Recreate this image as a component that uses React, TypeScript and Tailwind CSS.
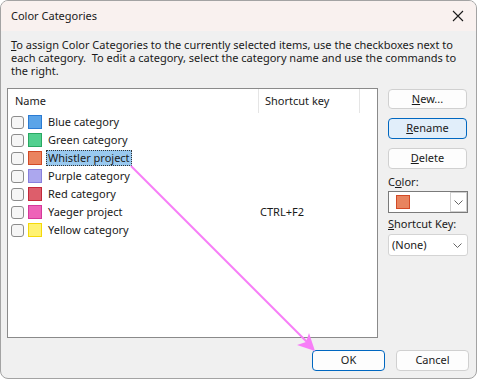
import React from "react";

const font = { fontFamily: '"Noto Sans", "Liberation Sans", sans-serif' };

const cats = [
  { name: "Blue category", fill: "#5ba4e8", border: "#2b7bd3", key: "" },
  { name: "Green category", fill: "#52d08f", border: "#2aa862", key: "" },
  { name: "Whistler project", fill: "#ea845f", border: "#d24a26", key: "", selected: true },
  { name: "Purple category", fill: "#aca7ee", border: "#8880dd", key: "" },
  { name: "Red category", fill: "#dd5e6b", border: "#c3283b", key: "" },
  { name: "Yaeger project", fill: "#ee62b8", border: "#d6389a", key: "CTRL+F2" },
  { name: "Yellow category", fill: "#fff272", border: "#f5d90a", key: "" },
];

function Btn({ children, variant = "normal", className = "" }: { children: React.ReactNode; variant?: "normal" | "focus" | "default"; className?: string }) {
  const v =
    variant === "focus"
      ? "border-[#0067c0] bg-[#e1eefa]"
      : variant === "default"
      ? "border-[#0067c0] bg-[#fdfdfd]"
      : "border-[#d0d0d0] bg-[#fdfdfd]";
  return (
    <div className={`h-[20px] rounded-[4px] border flex items-center justify-center text-[11px] text-[#1a1a1a] ${v} ${className}`}>
      {children}
    </div>
  );
}

export default function App() {
  return (
    <div className="relative w-[477px] h-[380px] bg-white" style={font}>
      <div className="w-[477px] h-[379px] border border-[#a3a3a3] rounded-[8px] bg-[#f0f0f0] overflow-hidden flex flex-col">
        <div className="h-[30px] bg-[#f9f1ef] flex items-center justify-between pl-[10px] pr-[9px] shrink-0">
          <span className="text-[11px] text-[#1a1a1a]">Color Categories</span>
          <svg width="12" height="12" viewBox="0 0 12 12" className="mr-[3px]">
            <path d="M1 1 L11 11 M11 1 L1 11" stroke="#1a1a1a" strokeWidth="1.1" />
          </svg>
        </div>
        <p className="pt-[7px] pl-[10px] pr-[8px] text-[11px] leading-[13px] text-[#1a1a1a] first-letter:underline">
          To assign Color Categories to the currently selected items, use the checkboxes next to each category.&nbsp; To edit a category, select the category name and use the commands to the right.
        </p>
        <div className="flex mt-[11px] ml-[6px]">
          <div className="w-[371px] h-[250px] border border-[#8a8a8a] bg-white text-[11px] text-[#1a1a1a]">
            <div className="h-[24px] flex items-center">
              <div className="w-[250px] pl-[7px] h-full flex items-center">Name</div>
              <div className="w-[1px] h-full bg-[#e5e5e5]" />
              <div className="w-[100px] pl-[6px] h-full flex items-center">Shortcut key</div>
              <div className="w-[1px] h-full bg-[#e5e5e5]" />
            </div>
            {cats.map((c) => (
              <div key={c.name} className="h-[18px] flex items-center">
                <div className="w-[250px] flex items-center pl-[3px]">
                  <div className="w-[13px] h-[13px] rounded-[3px] border border-[#8c8c8c] bg-[#f6f6f6]" />
                  <div className="w-[14px] h-[14px] ml-[4px] border" style={{ background: c.fill, borderColor: c.border }} />
                  <div
                    className={`ml-[4px] pl-[1px] pr-[1px] h-[16px] flex items-center ${c.selected ? "bg-[#99c9ef] border border-dotted border-[#333]" : "border border-transparent"}`}
                  >
                    {c.name}
                  </div>
                </div>
                <div className="pl-[2px]">{c.key}</div>
              </div>
            ))}
          </div>
          <div className="ml-[10px] w-[80px] flex flex-col pt-[1px] text-[11px] text-[#1a1a1a]">
            <Btn className="w-[79px]">
              <span className="underline">N</span>ew...
            </Btn>
            <Btn variant="focus" className="w-[79px] mt-[9px] h-[21px]">
              <span className="underline">R</span>ename
            </Btn>
            <Btn className="w-[79px] mt-[9px] h-[21px]">
              <span className="underline">D</span>elete
            </Btn>
            <div className="mt-[5px] leading-[15px]">
              C<span className="underline">o</span>lor:
            </div>
            <div className="mt-[2px] h-[22px] w-[80px] border border-[#7a7a7a] bg-white flex">
              <div className="flex-1 flex items-center pl-[7px]">
                <div className="w-[14px] h-[14px] bg-[#e8845f] border border-[#d24a26]" />
              </div>
              <div className="w-[17px] h-full border border-[#cfcfcf] bg-white flex items-center justify-center">
                <svg width="9" height="5" viewBox="0 0 9 5">
                  <path d="M0.5 0.5 L4.5 4.5 L8.5 0.5" fill="none" stroke="#666" strokeWidth="1" />
                </svg>
              </div>
            </div>
            <div className="mt-[3px] leading-[15px]">
              <span className="underline">S</span>hortcut Key:
            </div>
            <div className="mt-[3px] h-[22px] w-[80px] rounded-[3px] border border-[#d4d4d4] bg-white flex items-center justify-between pl-[3px] pr-[5px]">
              <span>(None)</span>
              <svg width="9" height="5" viewBox="0 0 9 5">
                <path d="M0.5 0.5 L4.5 4.5 L8.5 0.5" fill="none" stroke="#666" strokeWidth="1" />
              </svg>
            </div>
          </div>
        </div>
        <div className="flex justify-end mt-[12px] pr-[7px] gap-[11px]">
          <Btn variant="default" className="w-[73px] h-[21px]">OK</Btn>
          <Btn className="w-[73px] h-[21px]">Cancel</Btn>
        </div>
      </div>
      <svg className="absolute left-0 top-0 pointer-events-none" width="477" height="380">
        <line x1="131" y1="166" x2="308" y2="343" stroke="#f77ef7" strokeWidth="2" />
        <polygon points="315,351 297,345 306,342 309,333" fill="#f77ef7" />
      </svg>
    </div>
  );
}
